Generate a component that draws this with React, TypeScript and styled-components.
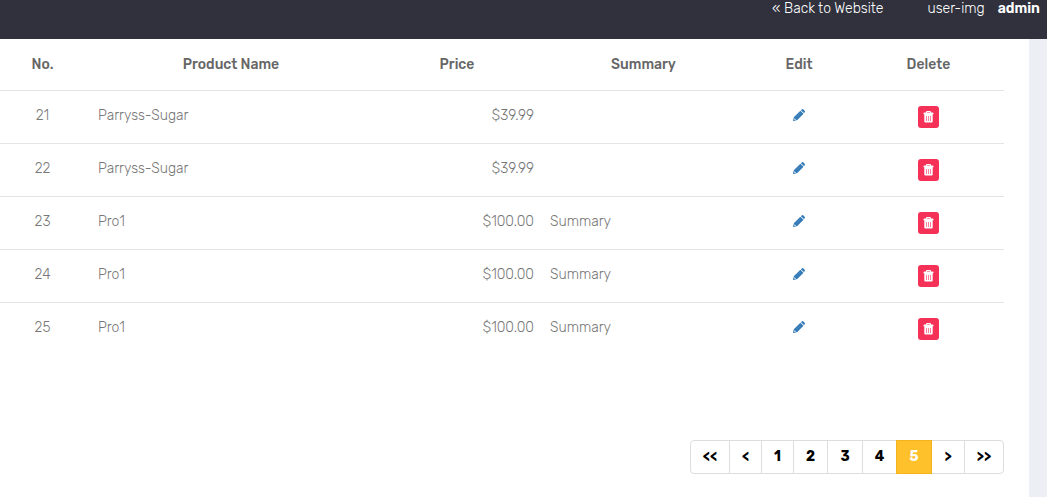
import React from 'react';
import styled, { createGlobalStyle, css } from 'styled-components';

const GlobalStyle = createGlobalStyle`
  * { box-sizing: border-box; }
  body {
    margin: 0;
    min-height: 100vh;
    background: #ecf0f5;
    color: #666;
    font-family: Rubik, Roboto, "Liberation Sans", sans-serif;
    font-size: 14px;
    line-height: 20px;
  }
`;

const Page = styled.div`
  min-height: 100vh;
  display: flex;
  flex-direction: column;
`;

const TopBar = styled.header`
  height: 39px;
  padding: 0 7px 0 16px;
  display: flex;
  justify-content: flex-end;
  align-items: flex-start;
  background: #30313d;
  color: #fff;
  font-weight: 300;
  line-height: 18px;
`;

const BackLink = styled.a`
  margin-right: 44px;
  color: inherit;
  text-decoration: none;
`;

const Account = styled.a`
  display: flex;
  gap: 13px;
  color: inherit;
  text-decoration: none;
`;

const UserName = styled.strong`
  font-weight: 600;
`;

const Panel = styled.main`
  flex: 1;
  margin-right: 18px;
  padding: 0 25px 23px 0;
  display: flex;
  flex-direction: column;
  background: #fff;
`;

const ProductTable = styled.table`
  width: 100%;
  table-layout: fixed;
  border-collapse: separate;
  border-spacing: 0;
`;

const Col = styled.col<{ $width?: number }>`
  ${p => p.$width && css`width: ${p.$width}px;`}
`;

const HeadCell = styled.th<{ $edge?: boolean }>`
  height: 51px;
  padding: ${p => (p.$edge ? '1px 8px 0 3px' : '1px 8px 0')};
  font-weight: 500;
  text-align: center;
`;

const Cell = styled.td<{ $align?: string; $edge?: boolean }>`
  height: 53px;
  padding: ${p => (p.$edge ? '15px 8px 0 3px' : '15px 8px 0')};
  border-top: 1px solid #e4e4e4;
  color: #777;
  font-weight: 300;
  text-align: ${p => p.$align || 'left'};
  vertical-align: top;
`;

const EditLink = styled.a`
  display: inline-flex;
  height: 18px;
  align-items: center;
  vertical-align: top;
  color: #337ab7;
`;

const DeleteButton = styled.button`
  display: inline-flex;
  width: 21px;
  height: 22px;
  padding: 0;
  align-items: center;
  justify-content: center;
  vertical-align: top;
  border: 0;
  border-radius: 3px;
  background: #f53157;
  color: #fff;
  cursor: pointer;
`;

const Pagination = styled.nav`
  display: grid;
  grid-template-columns: 39px 32px 32px 34px 35px 34px 35px 33px 39px;
  align-self: flex-end;
  margin-top: 85px;
`;

const PageButton = styled.button<{ $active?: boolean }>`
  height: 34px;
  padding: 0 0 2px;
  border: 1px solid #ddd;
  margin-left: -1px;
  background: #fff;
  color: #000;
  font-family: inherit;
  font-size: 14px;
  font-weight: 700;
  cursor: pointer;
  &:first-child { border-radius: 4px 0 0 4px; }
  &:last-child { border-radius: 0 4px 4px 0; }
  ${p => p.$active && css`
    z-index: 1;
    border-color: #f3b31c;
    background: #ffc12b;
    color: #fff;
  `}
`;

const PencilIcon = () => (
  <svg width="12" height="12" viewBox="0 0 12 12" fill="currentColor" aria-hidden="true">
    <path d="M8.5.7Q9.5-.4 10.5.5L11.6 1.7Q12.4 2.6 11.5 3.5L10.9 4.1 7.9 1.3Z" />
    <path fillRule="evenodd" d="M7.4 1.7 10.5 4.7 4.3 10.9 .7 12Q0 12 0 11.3L1 8ZM1.6 9.2 1.2 10.4 1.8 11 3 10.5Z" />
    <path d="M3 8.4 7.8 3.6" stroke="#6fa0cb" strokeWidth=".4" />
  </svg>
);

const TrashIcon = () => (
  <svg width="11" height="12" viewBox="0 0 11 12" fill="currentColor" aria-hidden="true">
    <path fillRule="evenodd" d="M3 1.5V1Q3 0 4 0H7Q8 0 8 1V1.5H9.5Q10.5 1.5 10.5 2.5V3.2H.5V2.5Q.5 1.5 1.5 1.5ZM4 1.5H7V1H4ZM1.3 3.2H9.7V10.5Q9.7 11.5 8.7 11.5H2.3Q1.3 11.5 1.3 10.5ZM3.1 5V10H3.7V5ZM5.2 5V10H5.8V5ZM7.3 5V10H7.9V5Z" />
  </svg>
);

const products = [
  { id: 21, name: 'Parryss-Sugar', price: '$39.99', summary: '' },
  { id: 22, name: 'Parryss-Sugar', price: '$39.99', summary: '' },
  { id: 23, name: 'Pro1', price: '$100.00', summary: 'Summary' },
  { id: 24, name: 'Pro1', price: '$100.00', summary: 'Summary' },
  { id: 25, name: 'Pro1', price: '$100.00', summary: 'Summary' },
];

const pages = ['<<', '<', '1', '2', '3', '4', '5', '>', '>>'];

export default function App() {
  return (
    <Page>
      <GlobalStyle />
      <TopBar>
        <BackLink href="#">« Back to Website</BackLink>
        <Account href="#">
          <span>user-img</span>
          <UserName>admin</UserName>
        </Account>
      </TopBar>
      <Panel>
        <ProductTable>
          <colgroup>
            <Col $width={90} />
            <Col />
            <Col $width={170} />
            <Col $width={203} />
            <Col $width={108} />
            <Col $width={151} />
          </colgroup>
          <thead>
            <tr>
              <HeadCell $edge>No.</HeadCell>
              <HeadCell>Product Name</HeadCell>
              <HeadCell>Price</HeadCell>
              <HeadCell>Summary</HeadCell>
              <HeadCell>Edit</HeadCell>
              <HeadCell>Delete</HeadCell>
            </tr>
          </thead>
          <tbody>
            {products.map(p => (
              <tr key={p.id}>
                <Cell $edge $align="center">{p.id}</Cell>
                <Cell>{p.name}</Cell>
                <Cell $align="right">{p.price}</Cell>
                <Cell>{p.summary}</Cell>
                <Cell $align="center">
                  <EditLink href="#" aria-label={`Edit product ${p.id}`}><PencilIcon /></EditLink>
                </Cell>
                <Cell $align="center">
                  <DeleteButton type="button" aria-label={`Delete product ${p.id}`}><TrashIcon /></DeleteButton>
                </Cell>
              </tr>
            ))}
          </tbody>
        </ProductTable>
        <Pagination aria-label="Product pages">
          {pages.map(label => (
            <PageButton
              key={label}
              type="button"
              $active={label === '5'}
              aria-current={label === '5' ? 'page' : undefined}
            >
              {label}
            </PageButton>
          ))}
        </Pagination>
      </Panel>
    </Page>
  );
}
